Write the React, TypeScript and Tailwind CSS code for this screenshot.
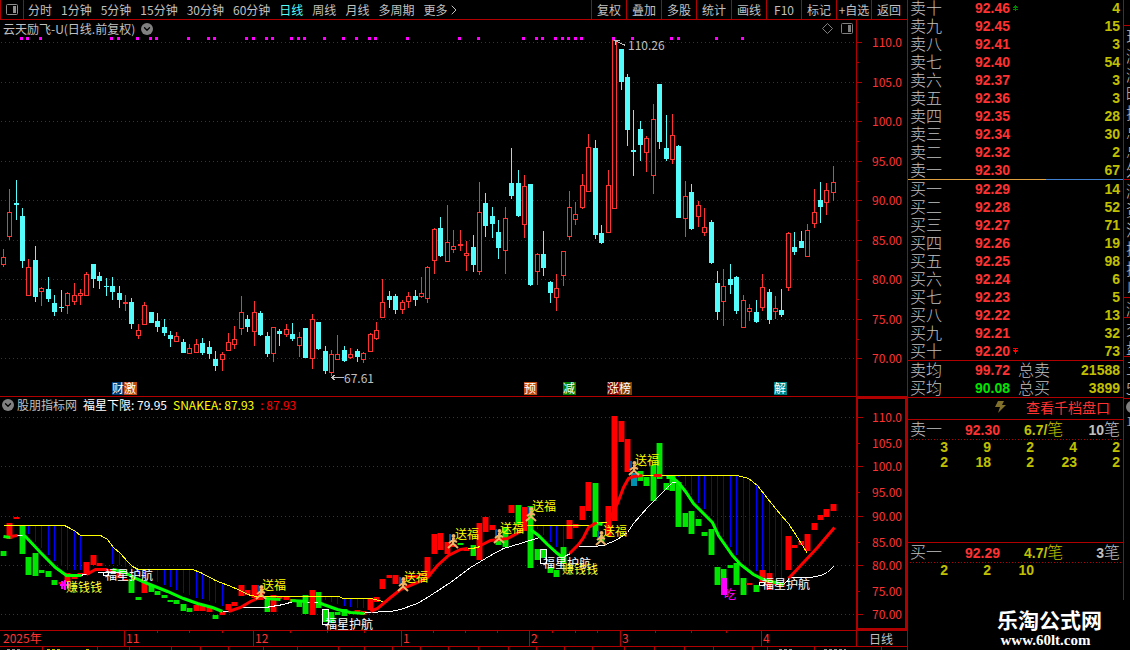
import { ChevronDown, ChevronRight } from "lucide-react";

type Candle = [high: number, low: number, top: number, bottom: number, up: number];
type Point = [number, number];

const CANDLES: Candle[] = [
  [249, 267, 257, 265, 1], [189, 240, 212, 237, 1], [180, 220, 203, 205, 0], [208, 268, 216, 261, 0], [259, 296, 267, 296, 1],
  [246, 302, 260, 297, 0], [287, 306, 288, 292, 1], [277, 302, 289, 299, 0], [295, 316, 303, 312, 0], [290, 312, 307, 308, 0],
  [292, 314, 293, 306, 1], [283, 305, 295, 302, 1], [289, 305, 293, 296, 1], [272, 296, 274, 296, 1], [264, 288, 264, 279, 0],
  [272, 289, 276, 281, 0], [278, 296, 286, 287, 0], [277, 300, 286, 292, 0], [286, 308, 293, 300, 0], [295, 311, 302, 304, 1],
  [298, 329, 302, 324, 0], [324, 339, 330, 336, 1], [302, 325, 305, 325, 1], [312, 323, 312, 323, 0], [313, 332, 321, 327, 0],
  [319, 336, 327, 333, 0], [331, 347, 335, 339, 0], [332, 342, 336, 342, 1], [339, 353, 342, 353, 0], [344, 354, 348, 354, 1],
  [339, 353, 344, 353, 1], [338, 355, 343, 353, 0], [341, 359, 347, 354, 0], [351, 371, 359, 366, 0], [352, 371, 354, 360, 1],
  [333, 351, 342, 351, 1], [326, 349, 339, 345, 1], [296, 335, 312, 329, 1], [315, 332, 319, 327, 0], [301, 346, 312, 332, 1],
  [311, 336, 313, 335, 0], [332, 357, 336, 354, 0], [327, 362, 327, 354, 1], [329, 346, 331, 334, 0], [324, 337, 329, 335, 1],
  [323, 341, 334, 339, 0], [332, 357, 337, 346, 1], [328, 358, 328, 358, 0], [314, 369, 319, 359, 1], [322, 350, 322, 349, 0],
  [346, 374, 351, 371, 0], [350, 376, 354, 373, 1], [335, 360, 354, 360, 1], [346, 362, 350, 361, 0], [348, 359, 354, 358, 1],
  [349, 362, 351, 357, 0], [352, 363, 353, 360, 1], [333, 352, 334, 352, 1], [322, 340, 330, 339, 1], [279, 318, 302, 318, 1],
  [291, 308, 296, 300, 0], [294, 314, 296, 310, 0], [300, 314, 302, 310, 1], [292, 308, 296, 302, 1], [290, 306, 296, 300, 0],
  [277, 298, 293, 297, 1], [266, 303, 267, 299, 1], [228, 274, 229, 261, 1], [217, 257, 228, 256, 0], [205, 262, 242, 262, 1],
  [230, 253, 246, 250, 1], [230, 251, 244, 246, 1], [241, 271, 253, 256, 1], [235, 272, 247, 265, 0], [182, 275, 212, 272, 1],
  [193, 237, 203, 226, 0], [207, 238, 216, 224, 0], [220, 259, 232, 248, 0], [207, 274, 218, 251, 1], [148, 199, 183, 196, 0],
  [170, 217, 183, 216, 0], [175, 238, 186, 225, 1], [184, 286, 184, 285, 0], [253, 285, 254, 272, 1], [231, 276, 254, 268, 0],
  [281, 303, 282, 293, 0], [274, 311, 288, 298, 1], [251, 286, 251, 276, 1], [191, 240, 207, 237, 1], [202, 225, 214, 220, 1],
  [174, 209, 185, 208, 1], [134, 192, 147, 192, 1], [140, 239, 148, 235, 0], [225, 244, 233, 243, 0], [170, 233, 185, 233, 1],
  [40, 209, 40, 209, 1], [49, 90, 49, 82, 0], [74, 146, 77, 130, 0], [110, 176, 150, 152, 0], [121, 161, 129, 145, 0],
  [136, 172, 138, 153, 1], [104, 194, 119, 176, 1], [84, 149, 84, 142, 0], [115, 161, 148, 159, 0], [114, 164, 135, 160, 1],
  [145, 218, 146, 218, 0], [181, 237, 196, 219, 1], [184, 230, 192, 229, 0], [201, 227, 205, 217, 1], [208, 236, 227, 233, 1],
  [220, 264, 222, 263, 0], [271, 320, 283, 312, 0], [269, 326, 286, 302, 1], [264, 294, 279, 285, 0], [276, 314, 277, 311, 0],
  [295, 328, 300, 328, 1], [304, 321, 308, 312, 1], [300, 323, 312, 322, 0], [274, 311, 287, 308, 1], [289, 324, 292, 320, 0],
  [296, 319, 308, 312, 1], [289, 317, 310, 315, 0], [232, 291, 233, 288, 1], [232, 255, 247, 252, 0], [231, 248, 241, 248, 0],
  [224, 257, 230, 257, 1], [189, 228, 212, 224, 1], [182, 223, 200, 207, 0], [183, 215, 190, 203, 1], [166, 201, 182, 193, 1],
];

// bars drawn green in the indicator pane, the rest are red
const GREEN_BARS = new Set([
  0, 3, 4, 5, 6, 7, 8, 20, 21, 23, 24, 25, 26, 27, 28, 29, 33, 41, 46, 47, 49, 50, 51, 52, 53, 71, 73, 77, 78, 80, 82, 83, 84,
  85, 86, 87, 92, 93, 99, 100, 101, 102, 103, 104, 105, 106, 107, 108, 109, 110, 111, 112, 113, 114, 115, 117,
]);

const DOTS = [
  21, 27, 40, 111, 118, 137, 150, 156, 188, 208, 214, 246, 253, 266, 272, 291, 298, 304, 324, 343, 356, 369, 375, 407, 459, 478,
  523, 536, 542, 555, 562, 568, 575, 581, 613, 632, 671, 678, 716, 742,
];

const YELLOW: Point[][] = [
  [[3, 525], [64, 525], [70, 528], [75, 531], [80, 535], [100, 535], [107, 539], [113, 547], [120, 553], [127, 561], [132, 566], [138, 569], [192, 569], [200, 572], [215, 580], [233, 587], [250, 595], [257, 596], [338, 596], [343, 598], [370, 598], [383, 601]],
  [[467, 548], [472, 548], [480, 546]],
  [[524, 525], [593, 525]],
  [[596, 522], [606, 522]],
  [[641, 475], [737, 475], [748, 478], [757, 485], [767, 498], [780, 514], [788, 523], [797, 537], [807, 553]],
];

const WHITE: Point[][] = [
  [[14, 535], [24, 535]],
  [[80, 575], [88, 573]],
  [[97, 572], [122, 572]],
  [[222, 611], [228, 611], [240, 607], [265, 607], [283, 604], [293, 601], [318, 602]],
  [[363, 613], [366, 612], [390, 611], [400, 609], [417, 603], [430, 595], [450, 582], [470, 567], [490, 555], [503, 548], [520, 543], [539, 537]],
  [[562, 557], [570, 553]],
  [[578, 546], [592, 546], [603, 545], [617, 539], [627, 532], [633, 523], [647, 507], [663, 491], [672, 482], [678, 482]],
  [[783, 584], [790, 577], [810, 577], [820, 575], [827, 572], [833, 566]],
];

const GREEN: Point[][] = [
  [[3, 536], [10, 537]],
  [[22, 535], [25, 536], [40, 552], [55, 567], [66, 575], [72, 575], [81, 575]],
  [[112, 569], [123, 571], [133, 577], [147, 583], [167, 591], [183, 598], [197, 603], [212, 607], [222, 611]],
  [[265, 598], [280, 599]],
  [[290, 600], [307, 601]],
  [[318, 602], [323, 604], [337, 609], [350, 612], [364, 613]],
  [[530, 529], [538, 535], [547, 544], [557, 553], [562, 557], [564, 557]],
  [[597, 523], [602, 524]],
  [[666, 477], [672, 477], [678, 482], [685, 491], [693, 503], [712, 522], [718, 535], [732, 555], [740, 564], [753, 574], [763, 579], [783, 584]],
];

const RED: Point[][] = [
  [[10, 536], [17, 535]],
  [[86, 574], [95, 569], [107, 569]],
  [[228, 611], [240, 607], [250, 601], [259, 597]],
  [[309, 601], [314, 601]],
  [[370, 611], [377, 608], [390, 597], [400, 589], [417, 582], [427, 577], [437, 565], [448, 555], [460, 549], [467, 548]],
  [[480, 545], [490, 540], [507, 538], [520, 531], [526, 524]],
  [[569, 553], [578, 544], [583, 537], [588, 527], [596, 522]],
  [[607, 526], [610, 517], [617, 503], [623, 487], [628, 478], [633, 476], [642, 475]],
  [[653, 475], [661, 475]],
  [[788, 578], [803, 562], [817, 547], [834, 527]],
];

// [first index, last index, yellow segment, green segment]
const BLUE_BANDS = [
  [3, 12, 0, 1],
  [17, 34, 0, 2],
  [50, 56, 0, 5],
  [83, 87, 2, 6],
  [103, 121, 4, 8],
];

const TAGS = [
  { x: 112, text: "财", color: "#003a70" },
  { x: 124, text: "激", color: "#c04c10" },
  { x: 524, text: "预", color: "#c04c10" },
  { x: 563, text: "减", color: "#008000" },
  { x: 607, text: "涨", color: "#800000" },
  { x: 619, text: "榜", color: "#804000" },
  { x: 774, text: "解", color: "#008080" },
];

const SIGNALS = [
  { x: 105, y: 580, text: "福星护航", color: "#ffffff" },
  { x: 66, y: 592, text: "赚钱钱", color: "#ffff30" },
  { x: 262, y: 590, text: "送福", color: "#ffff00" },
  { x: 325, y: 629, text: "福星护航", color: "#ffffff" },
  { x: 404, y: 582, text: "送福", color: "#ffff00" },
  { x: 455, y: 539, text: "送福", color: "#ffff00" },
  { x: 500, y: 533, text: "送福", color: "#ffff00" },
  { x: 532, y: 511, text: "送福", color: "#ffff00" },
  { x: 543, y: 568, text: "福星护航", color: "#ffffff" },
  { x: 562, y: 574, text: "赚钱钱", color: "#ffff30" },
  { x: 603, y: 536, text: "送福", color: "#ffff00" },
  { x: 635, y: 465, text: "送福", color: "#ffff00" },
  { x: 724, y: 599, text: "吃", color: "#ff00ff" },
  { x: 762, y: 589, text: "福星护航", color: "#ffffff" },
];

const RUNNERS: Point[] = [[261, 585], [403, 577], [453, 534], [499, 529], [531, 507], [601, 531], [634, 461]];

const PRICES = ["110.0", "105.0", "100.0", "95.00", "90.00", "85.00", "80.00", "75.00", "70.00"];
const UPPER_Y = [42, 82, 121, 161, 200, 240, 279, 319, 358];
const LOWER_Y = [417, 443, 466, 492, 516, 542, 565, 591, 614];

const PERIODS = ["分时", "1分钟", "5分钟", "15分钟", "30分钟", "60分钟", "日线", "周线", "月线", "多周期"];
const TOOLS = ["复权", "叠加", "多股", "统计", "画线", "F10", "标记", "+自选", "返回"];

const ASKS = [
  ["卖十", "92.46", "4"], ["卖九", "92.45", "15"], ["卖八", "92.41", "3"], ["卖七", "92.40", "54"], ["卖六", "92.37", "3"],
  ["卖五", "92.36", "3"], ["卖四", "92.35", "28"], ["卖三", "92.34", "30"], ["卖二", "92.32", "2"], ["卖一", "92.30", "67"],
];
const BIDS = [
  ["买一", "92.29", "14"], ["买二", "92.28", "52"], ["买三", "92.27", "71"], ["买四", "92.26", "19"], ["买五", "92.25", "98"],
  ["买六", "92.24", "6"], ["买七", "92.23", "5"], ["买八", "92.22", "13"], ["买九", "92.21", "32"], ["买十", "92.20", "73"],
];

const LABEL_CELL = "p-0 align-top text-left font-['Noto_Sans_CJK_SC',sans-serif] text-base leading-4 font-light text-[#c0c0c0]";
const NUMBERS = "w-full table-fixed font-['Liberation_Sans',sans-serif] text-sm font-bold";

const barX = (i: number) => Math.floor(3.25 + i * 6.435);
const lowerY = (y: number) => Math.round(417 + (y - 42) * 0.6234);
const toPath = (pts: Point[]) => pts.map((p) => p.join(",")).join(" ");

function yAt(pts: Point[], x: number) {
  for (let i = 1; i < pts.length; i++) {
    const [x0, y0] = pts[i - 1];
    const [x1, y1] = pts[i];
    if (x <= x1) return Math.round(y0 + ((Math.max(x, x0) - x0) / (x1 - x0)) * (y1 - y0));
  }
  return pts[pts.length - 1][1];
}

function GridLines({ ys }: { ys: number[] }) {
  return (
    <>
      {ys.map((y) => (
        <line key={y} x1="1" x2="100%" y1={y + 0.5} y2={y + 0.5} stroke="#b00000" strokeDasharray="1 3" />
      ))}
    </>
  );
}

function Lines({ lines, color, width }: { lines: Point[][]; color: string; width: number }) {
  return (
    <>
      {lines.map((pts, i) => (
        <polyline
          key={i}
          points={toPath(pts)}
          fill="none"
          stroke={color}
          strokeWidth={width}
          transform="translate(0.5 0.5)"
          shapeRendering={width === 1 ? "crispEdges" : "auto"}
        />
      ))}
    </>
  );
}

function PanelIcon({ color }: { color: string }) {
  return (
    <svg width="12" height="11" viewBox="0 0 12 11" fill="none">
      <rect x="0.5" y="0.5" width="11" height="10" rx="1" stroke={color} />
      <rect x="7" y="2" width="3" height="7" fill={color} />
    </svg>
  );
}

function RoundToggle() {
  return (
    <button aria-label="展开" className="flex size-3 items-center justify-center rounded-full bg-[#808080] text-black">
      <ChevronDown className="size-2.5" strokeWidth={3} />
    </button>
  );
}

function Runner({ x, y }: { x: number; y: number }) {
  return (
    <g transform={`translate(${x - 6} ${y})`} fill="none" stroke="#f0b468" strokeWidth="2" shapeRendering="auto">
      <rect x="2" y="0" width="2" height="7" fill="#0050a0" stroke="none" />
      <circle cx="6.500" cy="2" r="2" fill="#f0b468" stroke="none" />
      <path d="M6 4v6M2 9l4-3 4 2M6 9.500l-5 4.500M6 9.500l5 4.500" />
      <path d="M5 4h3l-1 6H5z" fill="#f0b468" stroke="none" />
    </g>
  );
}

function Toolbar() {
  return (
    <nav className="flex h-5 items-center border-b border-[#b00000]">
      <button aria-label="侧栏" className="flex h-full w-6 items-center justify-center border-x border-[#b00000] pb-px">
        <PanelIcon color="#909090" />
      </button>
      <div className="flex flex-1 items-center gap-[9px] pl-1">
        {PERIODS.map((p) => (
          <button key={p} className={p === "日线" ? "text-[#54fcfc]" : ""}>
            {p}
          </button>
        ))}
        <button className="flex items-center">
          更多
          <ChevronRight className="-ml-px size-4" strokeWidth={1.5} />
        </button>
      </div>
      {TOOLS.map((t) => (
        <button key={t} className="h-full w-[35px] border-l border-[#b00000] text-center whitespace-nowrap">
          {t}
        </button>
      ))}
      <span className="w-px" />
    </nav>
  );
}

function PriceChart() {
  return (
    <svg className="block h-[359px] w-full" shapeRendering="crispEdges">
      <g transform="translate(0 -37)">
        <GridLines ys={UPPER_Y} />
        {CANDLES.map(([high, low, top, bottom, up], i) => {
          const x = barX(i);
          const color = up ? "#ff3232" : "#54fcfc";
          return (
            <g key={i}>
              <rect x={x} y={high} width="1" height={low - high} fill={color} />
              {up ? (
                <rect x={x - 1.5} y={top + 0.5} width="4" height={bottom - top - 1} fill="#000" stroke={color} />
              ) : (
                <rect x={x - 2} y={top} width="5" height={bottom - top} fill={color} />
              )}
            </g>
          );
        })}
        {DOTS.map((x) => (
          <rect key={x} x={x - 1} y="37" width="3" height="3" fill="#ff00ff" />
        ))}
        <path d="M614.500 40.500l11 5M614.500 40.500h5M615.500 41v4M331.500 377.500h12M331.500 377.500l4-3M331.500 377.500l4 3" stroke="#c0c0c0" fill="none" />
        <text x="628" y="50" fontSize="12" fill="#c0c0c0">110.26</text>
        <text x="344" y="383" fontSize="12" fill="#c0c0c0">67.61</text>
        {TAGS.map((tag) => (
          <g key={tag.x}>
            <rect x={tag.x} y="382" width="13" height="13" fill={tag.color} />
            <text x={tag.x} y="393" fontSize="12" fill="#fff">{tag.text}</text>
          </g>
        ))}
      </g>
    </svg>
  );
}

function IndicatorChart() {
  return (
    <svg className="block h-[217px] w-full overflow-visible" shapeRendering="crispEdges">
      <g transform="translate(0 -413)">
        <GridLines ys={[417, 466, 516, 565, 614]} />
        {BLUE_BANDS.map(([from, to, y, g]) =>
          CANDLES.slice(from, to + 1).map((_, k) => {
            const x = barX(from + k);
            const top = yAt(YELLOW[y], x);
            return <rect key={x} x={x} y={top} width="1" height={Math.max(2, yAt(GREEN[g], x) - top - 5)} fill="#0000ff" />;
          })
        )}
        {CANDLES.map(([, , top, bottom], i) => {
          if (i === 98) return null;
          const green = GREEN_BARS.has(i);
          const y = lowerY(top);
          const height = Math.max(2, lowerY(bottom) - y);
          return (
            <g key={i}>
              <rect x={barX(i) - 3} y={y} width="7" height={height} fill={green ? "#006400" : "#780000"} />
              <rect x={barX(i) - 2} y={y} width="5" height={height} fill={green ? "#00e600" : "#ff0000"} />
            </g>
          );
        })}
        <rect x="631" y="473" width="6" height="13" fill="#0090b0" />
        <rect x="721" y="578" width="6" height="17" fill="#ff00ff" />
        <path d="M60 585h10M62 581v8M65 580v10M68 582v6" stroke="#ff00ff" strokeWidth="2" />
        <Lines lines={YELLOW} color="#ffff00" width={1} />
        <Lines lines={WHITE} color="#ffffff" width={1} />
        <Lines lines={GREEN} color="#00ff00" width={3} />
        <Lines lines={RED} color="#ff0000" width={3} />
        <path d="M322.500 609.500h6v15h-6zM540.500 549.500h6v14h-6zM103.500 572.500h5v3h-5zM759.500 582.500h5v3h-5z" fill="none" stroke="#fff" />
        {RUNNERS.map(([x, y]) => (
          <Runner key={x} x={x} y={y} />
        ))}
        {SIGNALS.map((s, i) => (
          <text key={i} x={s.x} y={s.y} fontSize="12" fill={s.color}>{s.text}</text>
        ))}
      </g>
    </svg>
  );
}

function PriceAxis({ ys, offset, right, minor }: { ys: number[]; offset: number; right: number; minor: boolean }) {
  return (
    <svg className="block h-full w-full" fill="#ff3232">
      <g transform={`translate(0 ${-offset})`}>
        {ys.map((y, i) => (
          <g key={y}>
            <rect x="0" y={y} width={minor || i % 2 === 0 ? 5 : 2} height="1" fill="#b00000" />
            {minor && i < ys.length - 1 && <rect x="0" y={y + 20} width="2" height="1" fill="#b00000" />}
            <text x={right} y={y + 5} fontSize="12" textAnchor="end">{PRICES[i]}</text>
          </g>
        ))}
      </g>
    </svg>
  );
}

function TimeAxis() {
  const months: [number, string][] = [[124, "11"], [253, "12"], [401, "1"], [529, "2"], [620, "3"], [761, "4"]];
  const minor = [157, 189, 222, 290, 327, 364, 433, 465, 497, 552, 575, 597, 655, 691, 726];
  return (
    <svg className="block h-[15px] w-full overflow-visible" shapeRendering="crispEdges" fill="#ff3232">
      <text x="3" y="12" fontSize="12">2025年</text>
      {months.map(([x, label]) => (
        <g key={x}>
          <rect x={x} y="0" width="1" height="15" fill="#b00000" />
          <text x={x + 2} y="12" fontSize="12">{label}</text>
        </g>
      ))}
      {minor.map((x) => (
        <rect key={x} x={x} y="0" width="1" height="2" fill="#b00000" />
      ))}
    </svg>
  );
}

function FooterTicks() {
  const ticks = [
    42, 97, 129, 171, 200, 228, 263, 297, 338, 364, 392, 420, 448, 478, 508, 536, 564, 592, 624, 654, 684, 713, 752, 767, 814, 881,
  ];
  return (
    <svg className="block h-[3px] w-full" shapeRendering="crispEdges">
      {ticks.map((x) => (
        <rect key={x} x={x} y="0" width="1" height="3" fill="#b00000" />
      ))}
      <path d="M7 2.500h14M779 2.500h14M824 2.500h22" stroke="#909090" strokeDasharray="3 2" />
      <path d="M47 2.500h14M86 2.500h3" stroke="#c0c000" strokeDasharray="3 2" />
    </svg>
  );
}

function BookRows({ rows }: { rows: string[][] }) {
  return (
    <table className={`${NUMBERS} leading-[18px]`}>
      <tbody>
        {rows.map(([label, price, volume]) => (
          <tr key={label} className="h-[18px]">
            <th className={`${LABEL_CELL} w-[67px] pl-0.5`}>{label}</th>
            <td className="p-0 text-[#ff3232]">
              <span className="flex items-center gap-[3px]">
                {price}
                {label === "卖十" && (
                  <svg width="5" height="6" viewBox="0 0 5 6" fill="#008000" shapeRendering="crispEdges">
                    <path d="M2 0h1v1h1v1h1v1H3v1h2v1H3v1H2V5H0V4h2V3H0V2h1V1h1z" />
                  </svg>
                )}
                {label === "买十" && (
                  <svg width="5" height="6" viewBox="0 0 5 6" fill="#ff0000" shapeRendering="crispEdges">
                    <path d="M0 0h5v1H3v1h2v1H4v1H3v2H2V4H1V3H0V2h2V1H0z" />
                  </svg>
                )}
              </span>
            </td>
            <td className="w-12 p-0 pr-[3px] text-right text-[#c0c000]">{volume}</td>
          </tr>
        ))}
      </tbody>
    </table>
  );
}

function Figure({ children }: { children: string }) {
  return <span className="font-['Liberation_Sans',sans-serif] text-sm leading-4 font-bold">{children}</span>;
}

function QueueBlock({ label, price, avg, count, rows }: { label: string; price: string; avg: string; count: string; rows: string[][] }) {
  return (
    <>
      <div className="flex h-[19px] items-start pr-[3px] pl-0.5 text-base leading-4 font-light text-[#c0c0c0]">
        <span className="w-[55px]">{label}</span>
        <span className="w-[59px] text-[#ff3232]">
          <Figure>{price}</Figure>
        </span>
        <span className="text-[#c0c000]">
          <Figure>{avg + "/"}</Figure>笔
        </span>
        <span className="ml-auto">
          <Figure>{count}</Figure>笔
        </span>
      </div>
      <svg className="mx-0.5 block h-px w-[212px]">
        <line x1="0" x2="212" y1="0.5" y2="0.5" stroke="#b00000" strokeDasharray="1 2" />
      </svg>
      <table className={`${NUMBERS} leading-[15px] text-[#c0c000]`}>
        <tbody>
          {rows.map((row, i) => (
            <tr key={i} className="h-[15px]">
              {row.map((cell, k) => (
                <td key={k} className="p-0 pr-[3px] text-right">{cell}</td>
              ))}
            </tr>
          ))}
        </tbody>
      </table>
    </>
  );
}

function OrderBook() {
  return (
    <aside className="flex w-[215px] shrink-0 flex-col">
      <div className="-mt-px">
        <BookRows rows={ASKS} />
      </div>
      <div className="flex h-px">
        <span className="w-[138px] bg-[#e0a040]" />
        <span className="flex-1 bg-[#4080d0]" />
      </div>
      <BookRows rows={BIDS} />
      <table className={`${NUMBERS} border-y border-[#b00000] leading-[18px]`}>
        <tbody>
          <tr className="h-[18px]">
            <th className={`${LABEL_CELL} w-[67px] pl-0.5`}>卖均</th>
            <td className="w-[43px] p-0 text-[#ff3232]">99.72</td>
            <th className={`${LABEL_CELL} w-10`}>总卖</th>
            <td className="p-0 pr-[3px] text-right text-[#c0c000]">21588</td>
          </tr>
          <tr className="h-[18px]">
            <th className={`${LABEL_CELL} pl-0.5`}>买均</th>
            <td className="p-0 text-[#00e600]">90.08</td>
            <th className={LABEL_CELL}>总买</th>
            <td className="p-0 pr-[3px] text-right text-[#c0c000]">3899</td>
          </tr>
        </tbody>
      </table>
      <button className="flex h-[22px] items-center justify-end gap-5 border-b border-[#b00000] pr-[13px] pb-1 text-sm leading-[18px] text-[#ff3232]">
        <svg width="11" height="12" viewBox="0 0 11 12" fill="#80702c">
          <path d="M3 0h6L7 4h4L3 12l2-6H0z" />
        </svg>
        查看千档盘口
      </button>
      <div className="h-[122px]">
        <QueueBlock
          label="卖一"
          price="92.30"
          avg="6.7"
          count="10"
          rows={[["3", "9", "2", "4", "2"], ["2", "18", "2", "23", "2"]]}
        />
      </div>
      <div className="border-t border-[#b00000]">
        <QueueBlock label="买一" price="92.29" avg="4.7" count="3" rows={[["2", "2", "10", "", ""]]} />
      </div>
      <div className="mt-7 flex flex-col items-center pr-1 pl-[72px] text-white">
        <span className="text-[21px] leading-[26px] font-bold">乐淘公式网</span>
        <a href="#" className="mr-2 font-['Liberation_Serif',serif] text-[15px] leading-4 font-bold">www.60lt.com</a>
      </div>
    </aside>
  );
}

function SideStrip() {
  const groups = [
    { height: "h-[154px]", chars: ["现", "涨", "涨", "昨", "换", "总", "总", "外"] },
    { height: "h-[118px]", chars: ["涨", "资", "流", "换", "换", "以"] },
    { height: "h-5", chars: ["涨"] },
    { height: "h-[39px]", chars: ["交", "盘"] },
    { height: "h-[42px]", chars: ["五", "5"] },
  ];
  return (
    <div className="h-[600px] w-[7px] shrink-0 overflow-hidden border-l border-[#b00000] pt-[25px] text-base leading-[18px] font-light">
      {groups.map((g, i) => (
        <div key={i} className={`flex flex-col justify-around border-t border-[#b00000] pl-0.5 ${g.height}`}>
          {g.chars.map((c, k) => (
            <div key={k} className="w-4">{c}</div>
          ))}
        </div>
      ))}
      <div className="border-t border-[#b00000] pt-0.5 pl-0.5">
        <div className="size-3 rounded-full bg-[#808080]" />
        <div className="text-xs">1</div>
      </div>
    </div>
  );
}

export default function App() {
  return (
    <div className="flex min-h-screen overflow-hidden bg-black font-['Noto_Sans_CJK_SC',sans-serif] text-xs leading-4 text-[#c0c0c0]">
      <main className="min-w-0 flex-1">
        <Toolbar />
        <section className="flex">
          <div className="min-w-0 flex-1">
            <header className="flex h-[17px] items-center pr-[3px] pl-[3px]">
              <h1 className="mr-1.5 font-normal">云天励飞-U(日线.前复权)</h1>
              <RoundToggle />
              <span className="ml-auto flex items-center gap-2">
                <svg width="11" height="11" viewBox="0 0 11 11" fill="none" stroke="#808080">
                  <path d="M5.500 0.500l5 5-5 5-5-5z" />
                </svg>
                <PanelIcon color="#808080" />
              </span>
            </header>
            <PriceChart />
          </div>
          <div className="w-[51px] border-l border-[#b00000]">
            <PriceAxis ys={UPPER_Y} offset={20} right={45} minor />
          </div>
        </section>
        <section className="flex border-y border-[#b00000]">
          <div className="min-w-0 flex-1">
            <header className="flex h-4 items-center gap-1.5 pl-0.5">
              <RoundToggle />
              <h2 className="-ml-[3px] font-normal">股朋指标网</h2>
              <span className="text-white">福星下限: 79.95</span>
              <span className="text-[#ffff00]">SNAKEA: 87.93</span>
              <span className="text-[#ff0000]">: 87.93</span>
            </header>
            <IndicatorChart />
          </div>
          <div className="w-[51px] border-2 border-[#b00000]">
            <PriceAxis ys={LOWER_Y} offset={399} right={44} minor={false} />
          </div>
        </section>
        <footer>
          <div className="flex border-b border-[#b00000]">
            <div className="min-w-0 flex-1">
              <TimeAxis />
            </div>
            <div className="w-[51px] border-l border-[#b00000] pl-3 leading-[15px]">日线</div>
          </div>
          <FooterTicks />
        </footer>
      </main>
      <div className="w-px shrink-0 bg-[#b00000]" />
      <OrderBook />
      <SideStrip />
    </div>
  );
}
